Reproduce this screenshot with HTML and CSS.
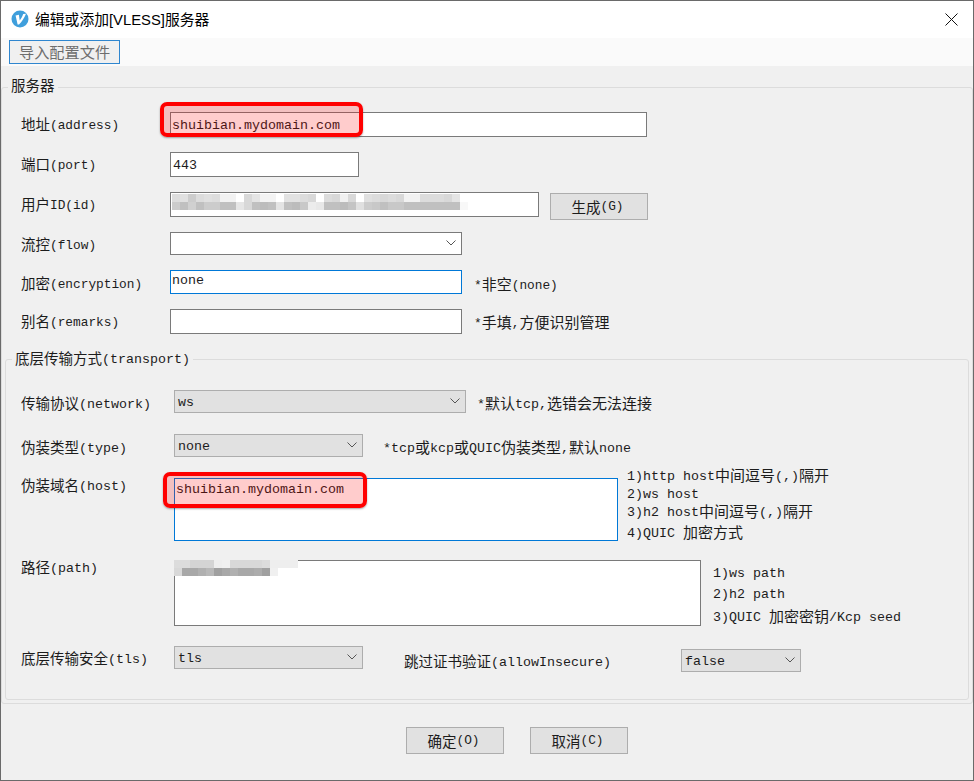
FILE: index.html
```html
<!DOCTYPE html>
<html lang="zh-CN">
<head>
<meta charset="utf-8">
<title>编辑或添加[VLESS]服务器</title>
<link rel="stylesheet" href="styles.css">
</head>
<body>
<div class="window">
  <header class="titlebar">
    <svg class="app-icon" width="18" height="18" viewBox="0 0 18 18"><circle cx="9" cy="9" r="8.5" fill="#3f9fdc"/><path d="M4.6 5.4 L7.9 4.8 L8.7 10.4 C10.2 8.8 11.4 6.6 12.2 4 L15 3.8 C13.4 8 11 11.6 8 14.6 L6.6 14.6 Z" fill="#fff"/></svg>
    <span class="title">编辑或添加[VLESS]服务器</span>
    <svg class="close" width="13" height="13" viewBox="0 0 13 13"><path d="M0.5 0.5 L12.5 12.5 M12.5 0.5 L0.5 12.5" stroke="#111" stroke-width="1" fill="none"/></svg>
  </header>
  <div class="toolbar"><div class="import-btn">导入配置文件</div></div>
  <main class="main">
    <section class="group server">
      <div class="legend legend-server">服务器</div>
      <div class="row h40">
        <div class="label">地址<span class="l">(address)</span></div>
        <div class="field w477 h25 tight">shuibian.mydomain.com<div class="mark mark-address"></div></div>
      </div>
      <div class="row h40">
        <div class="label">端口<span class="l">(port)</span></div>
        <div class="field w189 h25">443</div>
      </div>
      <div class="row h40">
        <div class="label">用户<span class="l">ID(id)</span></div>
        <div class="field w369 h25">
          <svg class="mosaic mosaic-id" width="296" height="16" viewBox="0 0 296 16" shape-rendering="crispEdges">
            <g>
              <rect x="0" width="8" height="8" fill="#ddd"/><rect x="8" width="8" height="8" fill="#e0e0e0"/><rect x="16" width="8" height="8" fill="#ccc"/><rect x="24" width="8" height="8" fill="#dcdcdc"/><rect x="32" width="8" height="8" fill="#e0e0e0"/><rect x="40" width="8" height="8" fill="#ddd"/><rect x="48" width="16" height="8" fill="#f2f2f2"/><rect x="72" width="8" height="8" fill="#d8d8d8"/><rect x="80" width="8" height="8" fill="#e4e4e4"/><rect x="88" width="16" height="8" fill="#f3f3f3"/><rect x="112" width="16" height="8" fill="#e2e2e2"/><rect x="128" width="8" height="8" fill="#dcdcdc"/><rect x="136" width="8" height="8" fill="#d8d8d8"/><rect x="152" width="8" height="8" fill="#dcdcdc"/><rect x="160" width="8" height="8" fill="#d8d8d8"/><rect x="168" width="8" height="8" fill="#f0f0f0"/><rect x="176" width="8" height="8" fill="#d8d8d8"/><rect x="192" width="8" height="8" fill="#e0e0e0"/><rect x="200" width="8" height="8" fill="#dcdcdc"/><rect x="208" width="8" height="8" fill="#d8d8d8"/><rect x="216" width="8" height="8" fill="#dcdcdc"/><rect x="224" width="8" height="8" fill="#d8d8d8"/><rect x="232" width="16" height="8" fill="#f2f2f2"/><rect x="248" width="24" height="8" fill="#dcdcdc"/><rect x="272" width="8" height="8" fill="#d8d8d8"/><rect x="280" width="8" height="8" fill="#e4e4e4"/>
            </g>
            <g>
              <rect x="0" y="8" width="8" height="8" fill="#ccc"/><rect x="8" y="8" width="8" height="8" fill="#c0c0c0"/><rect x="16" y="8" width="8" height="8" fill="#d0d0d0"/><rect x="24" y="8" width="8" height="8" fill="#c0c0c0"/><rect x="32" y="8" width="16" height="8" fill="#ccc"/><rect x="48" y="8" width="16" height="8" fill="#c0c0c0"/><rect x="64" y="8" width="8" height="8" fill="#e6e6e6"/><rect x="72" y="8" width="8" height="8" fill="#d8d8d8"/><rect x="80" y="8" width="8" height="8" fill="#c0c0c0"/><rect x="88" y="8" width="8" height="8" fill="#bcbcbc"/><rect x="96" y="8" width="8" height="8" fill="#c0c0c0"/><rect x="104" y="8" width="8" height="8" fill="#e4e4e4"/><rect x="112" y="8" width="8" height="8" fill="#c0c0c0"/><rect x="120" y="8" width="8" height="8" fill="#bcbcbc"/><rect x="128" y="8" width="8" height="8" fill="#c8c8c8"/><rect x="136" y="8" width="8" height="8" fill="#ececec"/><rect x="144" y="8" width="8" height="8" fill="#e8e8e8"/><rect x="152" y="8" width="16" height="8" fill="#c0c0c0"/><rect x="168" y="8" width="8" height="8" fill="#bcbcbc"/><rect x="176" y="8" width="8" height="8" fill="#c4c4c4"/><rect x="184" y="8" width="8" height="8" fill="#e0e0e0"/><rect x="192" y="8" width="8" height="8" fill="#ccc"/><rect x="200" y="8" width="8" height="8" fill="#c8c8c8"/><rect x="208" y="8" width="8" height="8" fill="#c0c0c0"/><rect x="216" y="8" width="16" height="8" fill="#c8c8c8"/><rect x="232" y="8" width="56" height="8" fill="#c0c0c0"/><rect x="288" y="8" width="8" height="8" fill="#f8f8f8"/>
            </g>
          </svg>
        </div>
        <div class="btn gen-btn">生成<span class="l">(G)</span></div>
      </div>
      <div class="row h38">
        <div class="label">流控<span class="l">(flow)</span></div>
        <div class="field select-white w292 h23">
          <svg class="chevron" width="10" height="6" viewBox="0 0 10 6"><path d="M0.5 0.5 L5 5 L9.5 0.5" fill="none" stroke="#555"/></svg>
        </div>
      </div>
      <div class="row h39">
        <div class="label label-low">加密<span class="l">(encryption)</span></div>
        <div class="field focus w292 h24 text-high">none</div>
        <div class="note note-m12 note-low"><span class="l">*</span>非空<span class="l">(none)</span></div>
      </div>
      <div class="row h50">
        <div class="label">别名<span class="l">(remarks)</span></div>
        <div class="field w292 h25"></div>
        <div class="note note-m12"><span class="l">*</span>手填<span class="l">,</span>方便识别管理</div>
      </div>

      <section class="group transport">
        <div class="legend legend-transport">底层传输方式<span class="l">(transport)</span></div>
        <div class="row h44">
          <div class="label label-low">传输协议<span class="l">(network)</span></div>
          <div class="field select w292 h23">ws<svg class="chevron" width="10" height="6" viewBox="0 0 10 6"><path d="M0.5 0.5 L5 5 L9.5 0.5" fill="none" stroke="#555"/></svg></div>
          <div class="note note-m11"><span class="l">*</span>默认<span class="l">tcp,</span>选错会无法连接</div>
        </div>
        <div class="row h44">
          <div class="label label-low">伪装类型<span class="l">(type)</span></div>
          <div class="field select w189 h23">none<svg class="chevron" width="10" height="6" viewBox="0 0 10 6"><path d="M0.5 0.5 L5 5 L9.5 0.5" fill="none" stroke="#555"/></svg></div>
          <div class="note note-m20"><span class="l">*tcp</span>或<span class="l">kcp</span>或<span class="l">QUIC</span>伪装类型<span class="l">,</span>默认<span class="l">none</span></div>
        </div>
        <div class="row h82">
          <div class="label label-top">伪装域名<span class="l">(host)</span></div>
          <div class="field area focus w444 h63">shuibian.mydomain.com<div class="mark mark-host"></div></div>
          <div class="notes notes-host">
            <div><span class="l">1)http host</span>中间逗号<span class="l">(,)</span>隔开</div>
            <div><span class="l">2)ws host</span></div>
            <div><span class="l">3)h2 host</span>中间逗号<span class="l">(,)</span>隔开</div>
            <div class="notes-host-last"><span class="l">4)QUIC </span>加密方式</div>
          </div>
        </div>
        <div class="row h86">
          <div class="label label-top">路径<span class="l">(path)</span></div>
          <div class="field area w527 h66">
            <svg class="mosaic mosaic-path" width="124" height="16" viewBox="0 0 124 16" shape-rendering="crispEdges">
              <rect x="0" width="16" height="8" fill="#dcdcdc"/><rect x="16" width="24" height="8" fill="#d4d4d4"/><rect x="40" width="8" height="8" fill="#eee"/><rect x="48" width="8" height="8" fill="#f0f0f0"/><rect x="56" width="32" height="8" fill="#d8d8d8"/><rect x="88" width="8" height="8" fill="#dcdcdc"/><rect x="96" width="28" height="8" fill="#eee"/>
              <rect x="0" y="8" width="8" height="8" fill="#d8d8d8"/><rect x="8" y="8" width="16" height="8" fill="#a8a8a8"/><rect x="24" y="8" width="8" height="8" fill="#b0b0b0"/><rect x="32" y="8" width="8" height="8" fill="#b8b8b8"/><rect x="40" y="8" width="8" height="8" fill="#a0a0a0"/><rect x="48" y="8" width="8" height="8" fill="#a8a8a8"/><rect x="56" y="8" width="8" height="8" fill="#b0b0b0"/><rect x="64" y="8" width="16" height="8" fill="#a8a8a8"/><rect x="80" y="8" width="8" height="8" fill="#acacac"/><rect x="88" y="8" width="8" height="8" fill="#a0a0a0"/><rect x="96" y="8" width="8" height="8" fill="#f0f0f0"/>
            </svg>
          </div>
          <div class="notes notes-path">
            <div><span class="l">1)ws path</span></div>
            <div><span class="l">2)h2 path</span></div>
            <div class="notes-path-last"><span class="l">3)QUIC </span>加密密钥<span class="l">/Kcp seed</span></div>
          </div>
        </div>
        <div class="row h53">
          <div class="label">底层传输安全<span class="l">(tls)</span></div>
          <div class="field select w189 h23">tls<svg class="chevron" width="10" height="6" viewBox="0 0 10 6"><path d="M0.5 0.5 L5 5 L9.5 0.5" fill="none" stroke="#555"/></svg></div>
          <div class="skip-label">跳过证书验证<span class="l">(allowInsecure)</span></div>
          <div class="field select false-select w120 h23">false<svg class="chevron" width="10" height="6" viewBox="0 0 10 6"><path d="M0.5 0.5 L5 5 L9.5 0.5" fill="none" stroke="#555"/></svg></div>
        </div>
      </section>
    </section>
    <footer class="actions">
      <div class="btn action-btn">确定<span class="l">(O)</span></div>
      <div class="btn action-btn">取消<span class="l">(C)</span></div>
    </footer>
  </main>
</div>
</body>
</html>
```
FILE: styles.css
```css
* { box-sizing: border-box; }
html, body { margin: 0; padding: 0; }
body {
  width: 974px;
  height: 781px;
  overflow: hidden;
  font-family: "Noto Sans CJK SC", "Liberation Sans", sans-serif;
  font-size: 14.5px;
  line-height: 20px;
  color: #1c1c1c;
}
.l { font-family: "Liberation Mono", monospace; font-size: 12.8px; line-height: 0; vertical-align: 1px; }
.transport .l { font-size: 13.33px; }

.window {
  width: 974px;
  height: 781px;
  border: 1px solid #6a6a6a;
  display: flex;
  flex-direction: column;
  background: #f0f0f0;
}
.titlebar {
  height: 37px;
  flex: none;
  background: #fff;
  display: flex;
  align-items: center;
  padding-left: 10px;
}
.app-icon { flex: none; margin-bottom: 2px; }
.title { margin-left: 6px; font-family: "Liberation Sans", "Noto Sans CJK SC", sans-serif; font-size: 14.8px; color: #000; }
.close { margin-left: auto; margin-right: 15px; }
.toolbar {
  height: 28px;
  flex: none;
  background: #fafafa;
  padding: 2px 0 0 8px;
}
.import-btn {
  width: 111px;
  height: 24px;
  border: 1px solid #2f86cf;
  background: #f0f0f0;
  color: #6d6d6d;
  font-size: 15.2px;
  text-align: center;
  line-height: 21px;
}
.main { flex: 1; display: flex; flex-direction: column; padding-top: 21px; }

.group { border: 1px solid #dcdcdc; border-radius: 3px; }
.server { height: 617px; }
.transport { margin: 0 3px; }
.legend { width: max-content; height: 20px; padding: 0 3px; background: #f0f0f0; }
.legend-server { margin: -13px 0 17px 6px; }
.legend-transport { margin: -12px 0 22px 6px; }

.row { display: flex; align-items: flex-start; }
.server > .row { padding-left: 19px; }
.transport > .row { padding-left: 15px; }
.h38 { height: 38px; } .h39 { height: 39px; } .h40 { height: 40px; }
.h44 { height: 44px; } .h50 { height: 50px; } .h53 { height: 53px; }
.h82 { height: 82px; } .h86 { height: 86px; }

.label { flex: none; margin-top: 2px; }
.server > .row > .label { width: 149px; }
.transport > .row > .label { width: 153px; }
.label.label-low { margin-top: 3px; }
.label.label-top { margin-top: -3px; }

.field {
  position: relative;
  flex: none;
  display: flex;
  align-items: center;
  padding: 2px 0 0 2px;
  background: #fff;
  border: 1px solid #7a7a7a;
  font-family: "Liberation Mono", monospace;
  font-size: 13.33px;
}
.w120 { width: 120px; } .w189 { width: 189px; } .w292 { width: 292px; }
.w369 { width: 369px; } .w444 { width: 444px; } .w477 { width: 477px; } .w527 { width: 527px; }
.field.h23 { height: 23px; } .field.h24 { height: 24px; } .field.h25 { height: 25px; }
.field.h63 { height: 63px; } .field.h66 { height: 66px; }
.field.tight { padding-left: 1px; }
.focus { border-color: #0078d7; }
.field.text-high { padding: 0 0 2px 1px; }
.select { background: #e1e1e1; border-color: #adadad; }
.field.select { padding-left: 3px; }
.field.area { align-items: flex-start; padding: 1px 0 0 1px; }
.chevron { position: absolute; right: 5px; top: 7px; }
.mark {
  position: absolute;
  background: rgba(255, 0, 0, 0.2);
  border: 4px solid #f00;
  border-radius: 7px;
  box-shadow: 0 1px 2px rgba(0, 0, 0, 0.35);
}
.mark-address { left: -11px; top: -11px; width: 203px; height: 35px; }
.mark-host { left: -12px; top: -7px; width: 204px; height: 36px; }
.mosaic { position: absolute; }
.mosaic-id { left: 1px; top: 1px; }
.mosaic-path { left: -1px; top: -1px; }

.note, .notes { font-size: 15px; }
.note { flex: none; margin-top: 3px; }
.note-m11 { margin-left: 11px; }
.note-m12 { margin-left: 12px; }
.note-m20 { margin-left: 20px; }
.note-low { margin-top: 4px; }
.notes { flex: none; }
.notes-host { margin: -12px 0 0 9px; line-height: 18px; }
.notes-host-last { margin-top: 3px; }
.notes-path { margin: 1px 0 0 12px; line-height: 21px; }
.notes-path-last { margin-top: 2px; }
.skip-label { flex: none; width: 277px; margin: 5px 0 0 41px; }
.false-select { margin-top: 3px; }

.btn {
  flex: none;
  width: 98px;
  height: 27px;
  padding-right: 3px;
  background: #e1e1e1;
  border: 1px solid #adadad;
  display: flex;
  align-items: center;
  justify-content: center;
}
.gen-btn { margin: 1px 0 0 11px; }
.actions { display: flex; gap: 26px; margin: 23px 0 0 405px; }
```
